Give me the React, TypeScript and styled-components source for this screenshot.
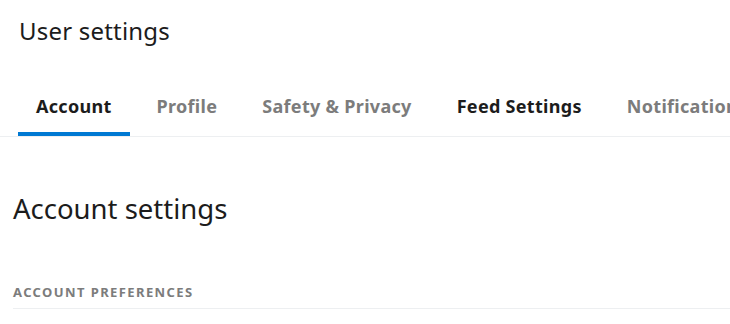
import React from "react";
import styled, { createGlobalStyle } from "styled-components";

const GlobalStyle = createGlobalStyle`
  body {
    margin: 0;
    background: #ffffff;
    font-family: "Noto Sans", "Open Sans", sans-serif;
    color: #1c1c1c;
    overflow: hidden;
  }
`;

const Page = styled.div`
  width: 730px;
  height: 324px;
  overflow: hidden;
`;

const Title = styled.h1`
  margin: 0;
  padding: 15px 0 0 19px;
  font-size: 24px;
  line-height: 32px;
  font-weight: 400;
  letter-spacing: 0.2px;
  color: #1c1c1c;
`;

const TabBar = styled.nav`
  display: flex;
  gap: 9px;
  margin-top: 47px;
  padding-left: 18px;
  border-bottom: 1px solid #edeff1;
  white-space: nowrap;
`;

const Tab = styled.a<{ $active?: boolean; $dark?: boolean }>`
  display: block;
  padding: 0 18px 14px;
  font-size: 18px;
  line-height: 24px;
  font-weight: 700;
  letter-spacing: 0.3px;
  text-decoration: none;
  color: ${(p) => (p.$active || p.$dark ? "#1c1c1c" : "#7c7c7c")};
  border-bottom: 4px solid ${(p) => (p.$active ? "#0079d3" : "transparent")};
  flex-shrink: 0;
`;

const Section = styled.section`
  padding: 54px 0 0 13px;
`;

const SectionTitle = styled.h2`
  margin: 0;
  font-size: 27.5px;
  line-height: 36px;
  font-weight: 400;
  color: #1c1c1c;
`;

const GroupLabel = styled.h3`
  margin: 57px 0 0;
  padding-bottom: 8px;
  font-size: 13px;
  line-height: 16px;
  font-weight: 700;
  letter-spacing: 1.4px;
  text-transform: uppercase;
  color: #7c7c7c;
  border-bottom: 1px solid #edeff1;
`;

const TABS = ["Account", "Profile", "Safety & Privacy", "Feed Settings", "Notifications"];

export default function App() {
  return (
    <Page>
      <GlobalStyle />
      <Title>User settings</Title>
      <TabBar>
        {TABS.map((t) => (
          <Tab key={t} href="#" $active={t === "Account"} $dark={t === "Feed Settings"}>
            {t}
          </Tab>
        ))}
      </TabBar>
      <Section>
        <SectionTitle>Account settings</SectionTitle>
        <GroupLabel>Account preferences</GroupLabel>
      </Section>
    </Page>
  );
}
